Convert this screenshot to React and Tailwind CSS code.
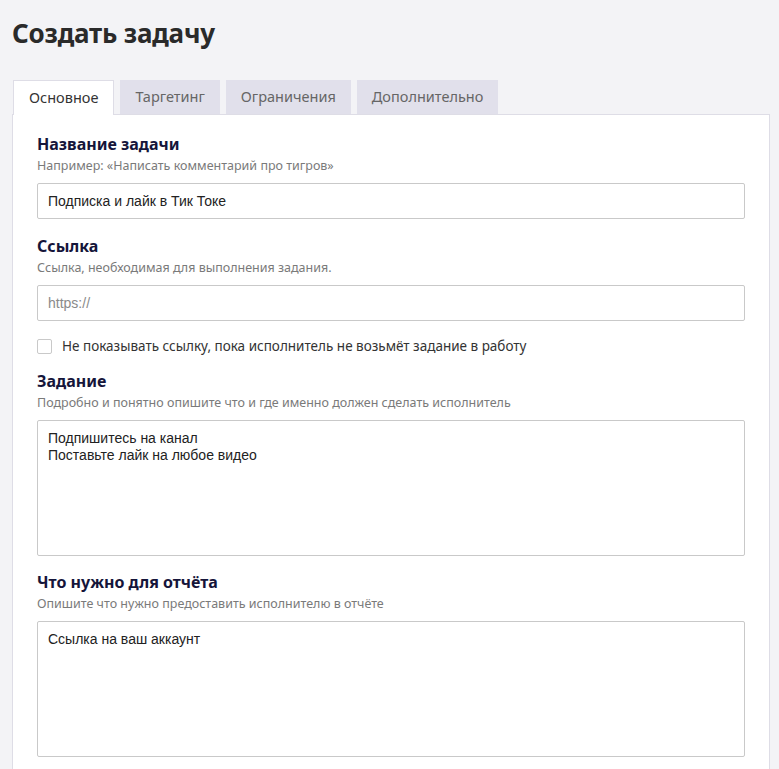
import React, { useState } from 'react';

const tabs = ['Основное', 'Таргетинг', 'Ограничения', 'Дополнительно'];

function Field({ label, hint, children }) {
  return (
    <div>
      <div className="text-[16px] leading-[20px] font-bold text-[#15153a]">{label}</div>
      <div className="mt-[3px] text-[12.5px] leading-[18px] text-[#7a7a7a]">{hint}</div>
      <div className="mt-[8px]">{children}</div>
    </div>
  );
}

export default function App() {
  const [active, setActive] = useState(0);
  const [name, setName] = useState('Подписка и лайк в Тик Токе');
  const [link, setLink] = useState('');
  const [hide, setHide] = useState(false);
  const [task, setTask] = useState('Подпишитесь на канал\nПоставьте лайк на любое видео');
  const [report, setReport] = useState('Ссылка на ваш аккаунт');

  const inputCls =
    "block w-full h-[36px] px-[10px] border border-[#c9c9c9] rounded-[2px] bg-white text-[14px] text-[#222] outline-none placeholder:text-[#8a8a8a] font-['Liberation_Sans',Arial,sans-serif]";
  const areaCls =
    "block w-full h-[136px] px-[10px] py-[9px] border border-[#c9c9c9] rounded-[2px] bg-white text-[14px] leading-[17px] text-[#222] outline-none resize-none font-['Liberation_Sans',Arial,sans-serif]";

  return (
    <div className="min-h-screen bg-[#f3f3f6] font-['Noto_Sans',sans-serif] pl-[12px] pr-[9px]">
      <h1 className="pt-[14px] text-[26px] leading-[38px] font-bold text-[#2a2a2a] tracking-[-0.2px]">Создать задачу</h1>
      <div className="mt-[28px] flex gap-[6px] pl-[1px]">
        {tabs.map((t, i) => (
          <button
            key={t}
            onClick={() => setActive(i)}
            className={
              i === active
                ? 'h-[35px] px-[15px] bg-white border border-b-0 border-[#dedde6] text-[14.5px] text-[#333] relative z-10 -mb-px'
                : 'h-[34px] px-[15px] bg-[#e1e0eb] text-[14.5px] text-[#666]'
            }
          >
            {t}
          </button>
        ))}
      </div>
      <div className="bg-white border border-[#dedde6] px-[24px] pt-[19px] pb-[40px] flex flex-col">
        <Field label="Название задачи" hint="Например: «Написать комментарий про тигров»">
          <input className={inputCls} value={name} onChange={(e) => setName(e.target.value)} />
        </Field>
        <div className="mt-[17px]">
          <Field label="Ссылка" hint="Ссылка, необходимая для выполнения задания.">
            <input
              className={inputCls}
              placeholder="https://"
              value={link}
              onChange={(e) => setLink(e.target.value)}
            />
          </Field>
        </div>
        <label className="mt-[15px] flex items-center gap-[10px] cursor-pointer">
          <input
            type="checkbox"
            checked={hide}
            onChange={(e) => setHide(e.target.checked)}
            className="appearance-none w-[15px] h-[15px] border border-[#c9c9c9] rounded-[2px] bg-white checked:bg-[#5b5bd6] checked:border-[#5b5bd6] shrink-0"
          />
          <span className="text-[13.5px] leading-[20px] text-[#333]">
            Не показывать ссылку, пока исполнитель не возьмёт задание в работу
          </span>
        </label>
        <div className="mt-[15px]">
          <Field label="Задание" hint="Подробно и понятно опишите что и где именно должен сделать исполнитель">
            <textarea className={areaCls} value={task} onChange={(e) => setTask(e.target.value)} />
          </Field>
        </div>
        <div className="mt-[16px]">
          <Field label="Что нужно для отчёта" hint="Опишите что нужно предоставить исполнителю в отчёте">
            <textarea className={areaCls} value={report} onChange={(e) => setReport(e.target.value)} />
          </Field>
        </div>
      </div>
    </div>
  );
}
